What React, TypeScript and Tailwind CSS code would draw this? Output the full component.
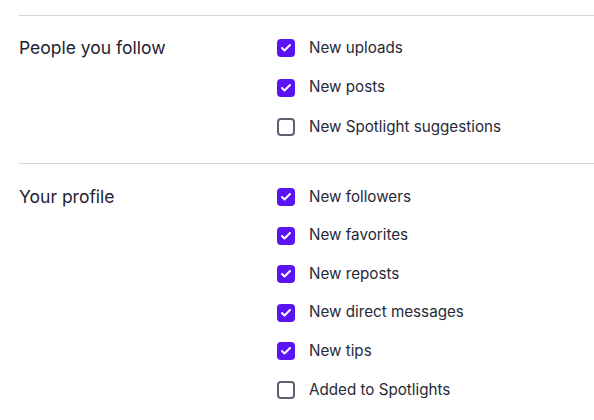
import { Check } from "lucide-react";

interface Option {
  label: string;
  checked: boolean;
}

interface Section {
  title: string;
  padding: string;
  gap: string;
  options: Option[];
}

const SECTIONS: Section[] = [
  {
    title: "People you follow",
    padding: "pt-5 pb-6",
    gap: "gap-[15.5px]",
    options: [
      { label: "New uploads", checked: true },
      { label: "New posts", checked: true },
      { label: "New Spotlight suggestions", checked: false },
    ],
  },
  {
    title: "Your profile",
    padding: "pt-[21px] pb-6",
    gap: "gap-[14.6px]",
    options: [
      { label: "New followers", checked: true },
      { label: "New favorites", checked: true },
      { label: "New reposts", checked: true },
      { label: "New direct messages", checked: true },
      { label: "New tips", checked: true },
      { label: "Added to Spotlights", checked: false },
    ],
  },
];

const Checkbox = ({ checked }: { checked: boolean }) =>
  checked ? (
    <span className="w-[18px] h-[18px] rounded-[4px] bg-[#5a14f4] flex items-center justify-center shrink-0">
      <Check className="w-3 h-3 text-white" strokeWidth={4} />
    </span>
  ) : (
    <span className="w-[18px] h-[18px] rounded-[4px] border-2 border-[#5d6072] bg-white shrink-0" />
  );

export default function App() {
  return (
    <div className="w-[594px] h-[420px] bg-white pl-[19px] pt-[15px] overflow-hidden font-['Inter',sans-serif]">
      {SECTIONS.map((section) => (
        <div key={section.title} className={`border-t border-[#d6d6d8] flex ${section.padding}`}>
          <div className="w-[258px] shrink-0 text-[17.5px] leading-6 text-[#1d2230]">
            {section.title}
          </div>
          <div className={`flex flex-col ${section.gap}`}>
            {section.options.map((opt) => (
              <label key={opt.label} className="flex items-center h-6 gap-[14px]">
                <Checkbox checked={opt.checked} />
                <span className="text-[15.2px] text-[#262a37]">{opt.label}</span>
              </label>
            ))}
          </div>
        </div>
      ))}
    </div>
  );
}
